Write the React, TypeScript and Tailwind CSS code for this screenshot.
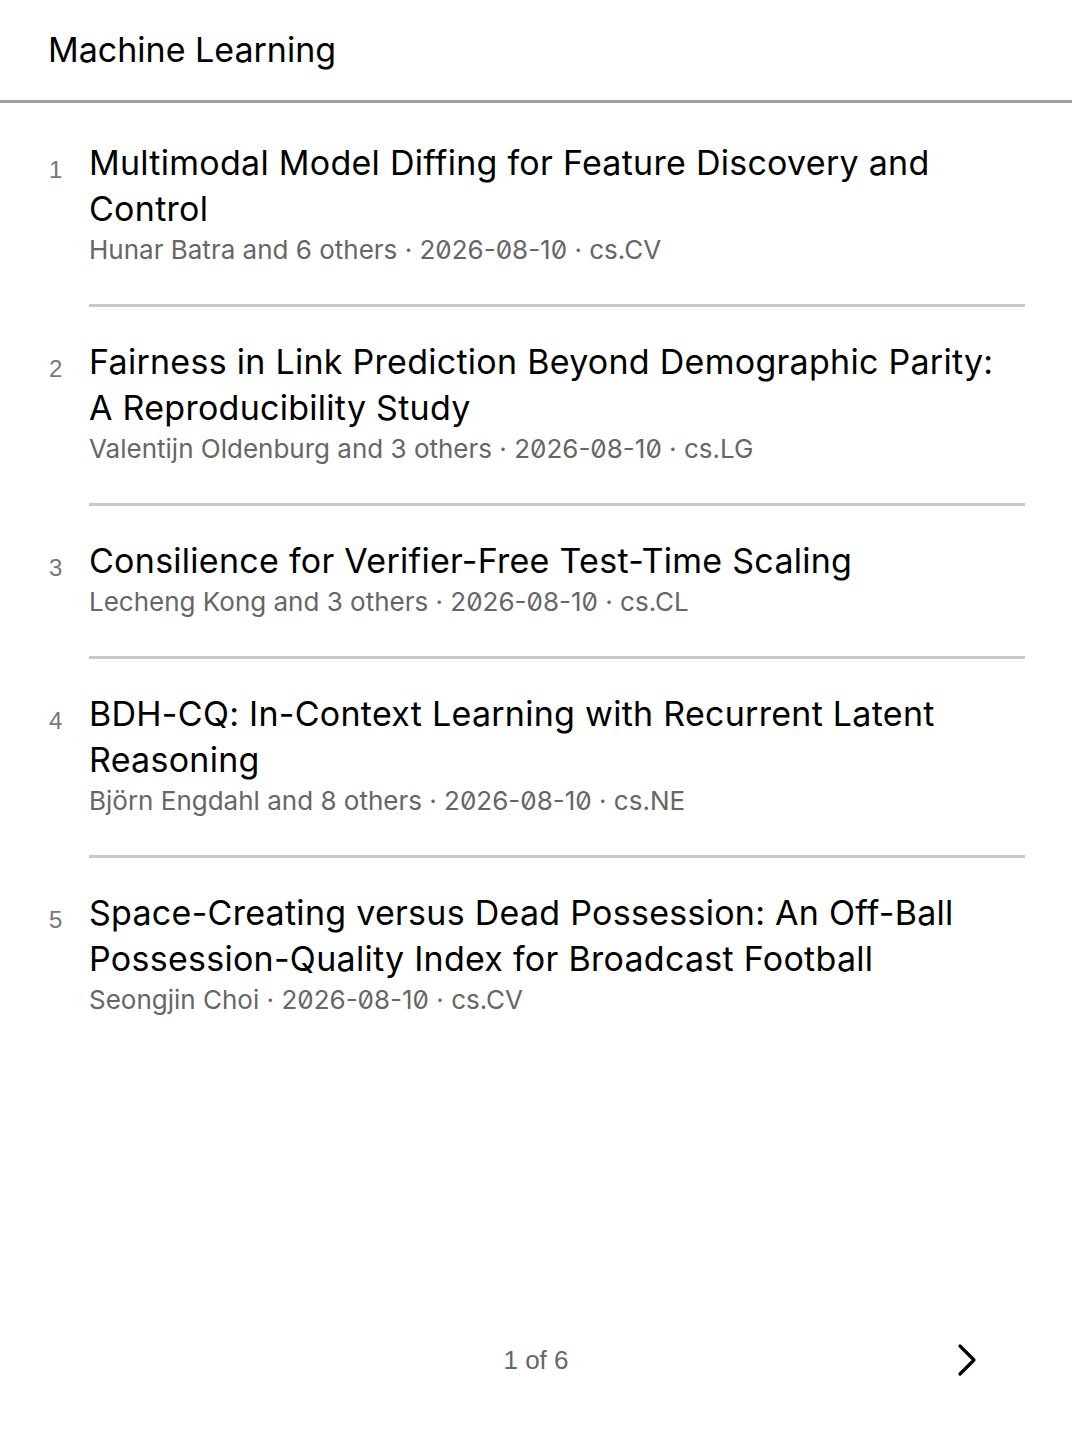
type Paper = {
  title: string;
  authors: string;
  date: string;
  category: string;
};

const papers: Paper[] = [
  {
    title: "Multimodal Model Diffing for Feature Discovery and Control",
    authors: "Hunar Batra and 6 others",
    date: "2026-08-10",
    category: "cs.CV",
  },
  {
    title: "Fairness in Link Prediction Beyond Demographic Parity: A Reproducibility Study",
    authors: "Valentijn Oldenburg and 3 others",
    date: "2026-08-10",
    category: "cs.LG",
  },
  {
    title: "Consilience for Verifier-Free Test-Time Scaling",
    authors: "Lecheng Kong and 3 others",
    date: "2026-08-10",
    category: "cs.CL",
  },
  {
    title: "BDH-CQ: In-Context Learning with Recurrent Latent Reasoning",
    authors: "Björn Engdahl and 8 others",
    date: "2026-08-10",
    category: "cs.NE",
  },
  {
    title: "Space-Creating versus Dead Possession: An Off-Ball Possession-Quality Index for Broadcast Football",
    authors: "Seongjin Choi",
    date: "2026-08-10",
    category: "cs.CV",
  },
];

export default function App() {
  return (
    <div className="flex min-h-screen w-full flex-col bg-white pb-[44px] font-['Inter',sans-serif] text-black">
      {/* Header */}
      <header className="flex h-[103px] items-center border-b-[3px] border-[#a0a0a0] px-12">
        <h1 className="text-[34px] leading-none">Machine Learning</h1>
      </header>

      {/* List */}
      <ol className="pl-12 pr-[47px] pt-[5px]">
        {papers.map((p, i) => (
          <li key={i} className="flex items-baseline">
            <span className="w-[41px] shrink-0 translate-y-[3px] pl-[1px] font-['Liberation_Sans',sans-serif] text-[24px] text-[#777]">
              {i + 1}
            </span>
            <div
              className={`min-w-0 flex-1 pt-[32px] pb-[36px] ${
                i < papers.length - 1 ? "border-b-[3px] border-[#c8c8c8]" : ""
              }`}
            >
              <div className="pr-[12px] text-[34px] leading-[46px] tracking-[0.008em]">{p.title}</div>
              <div className="text-[26px] leading-[36px] text-[#666] slashed-zero">
                {p.authors} · {p.date} · {p.category}
              </div>
            </div>
          </li>
        ))}
      </ol>

      {/* Footer */}
      <footer className="relative mt-auto flex h-[88px] items-center justify-center">
        <span className="font-['Liberation_Sans',sans-serif] text-[26px] text-[#666]">1 of 6</span>
        <button className="absolute right-[94px] top-1/2 -translate-y-1/2 text-black">
          <svg width="22" height="34" viewBox="0 0 22 34" fill="none" stroke="currentColor" strokeWidth="3.2" strokeLinecap="round" strokeLinejoin="round">
            <polyline points="4,3 18,17 4,31" />
          </svg>
        </button>
      </footer>
    </div>
  );
}
